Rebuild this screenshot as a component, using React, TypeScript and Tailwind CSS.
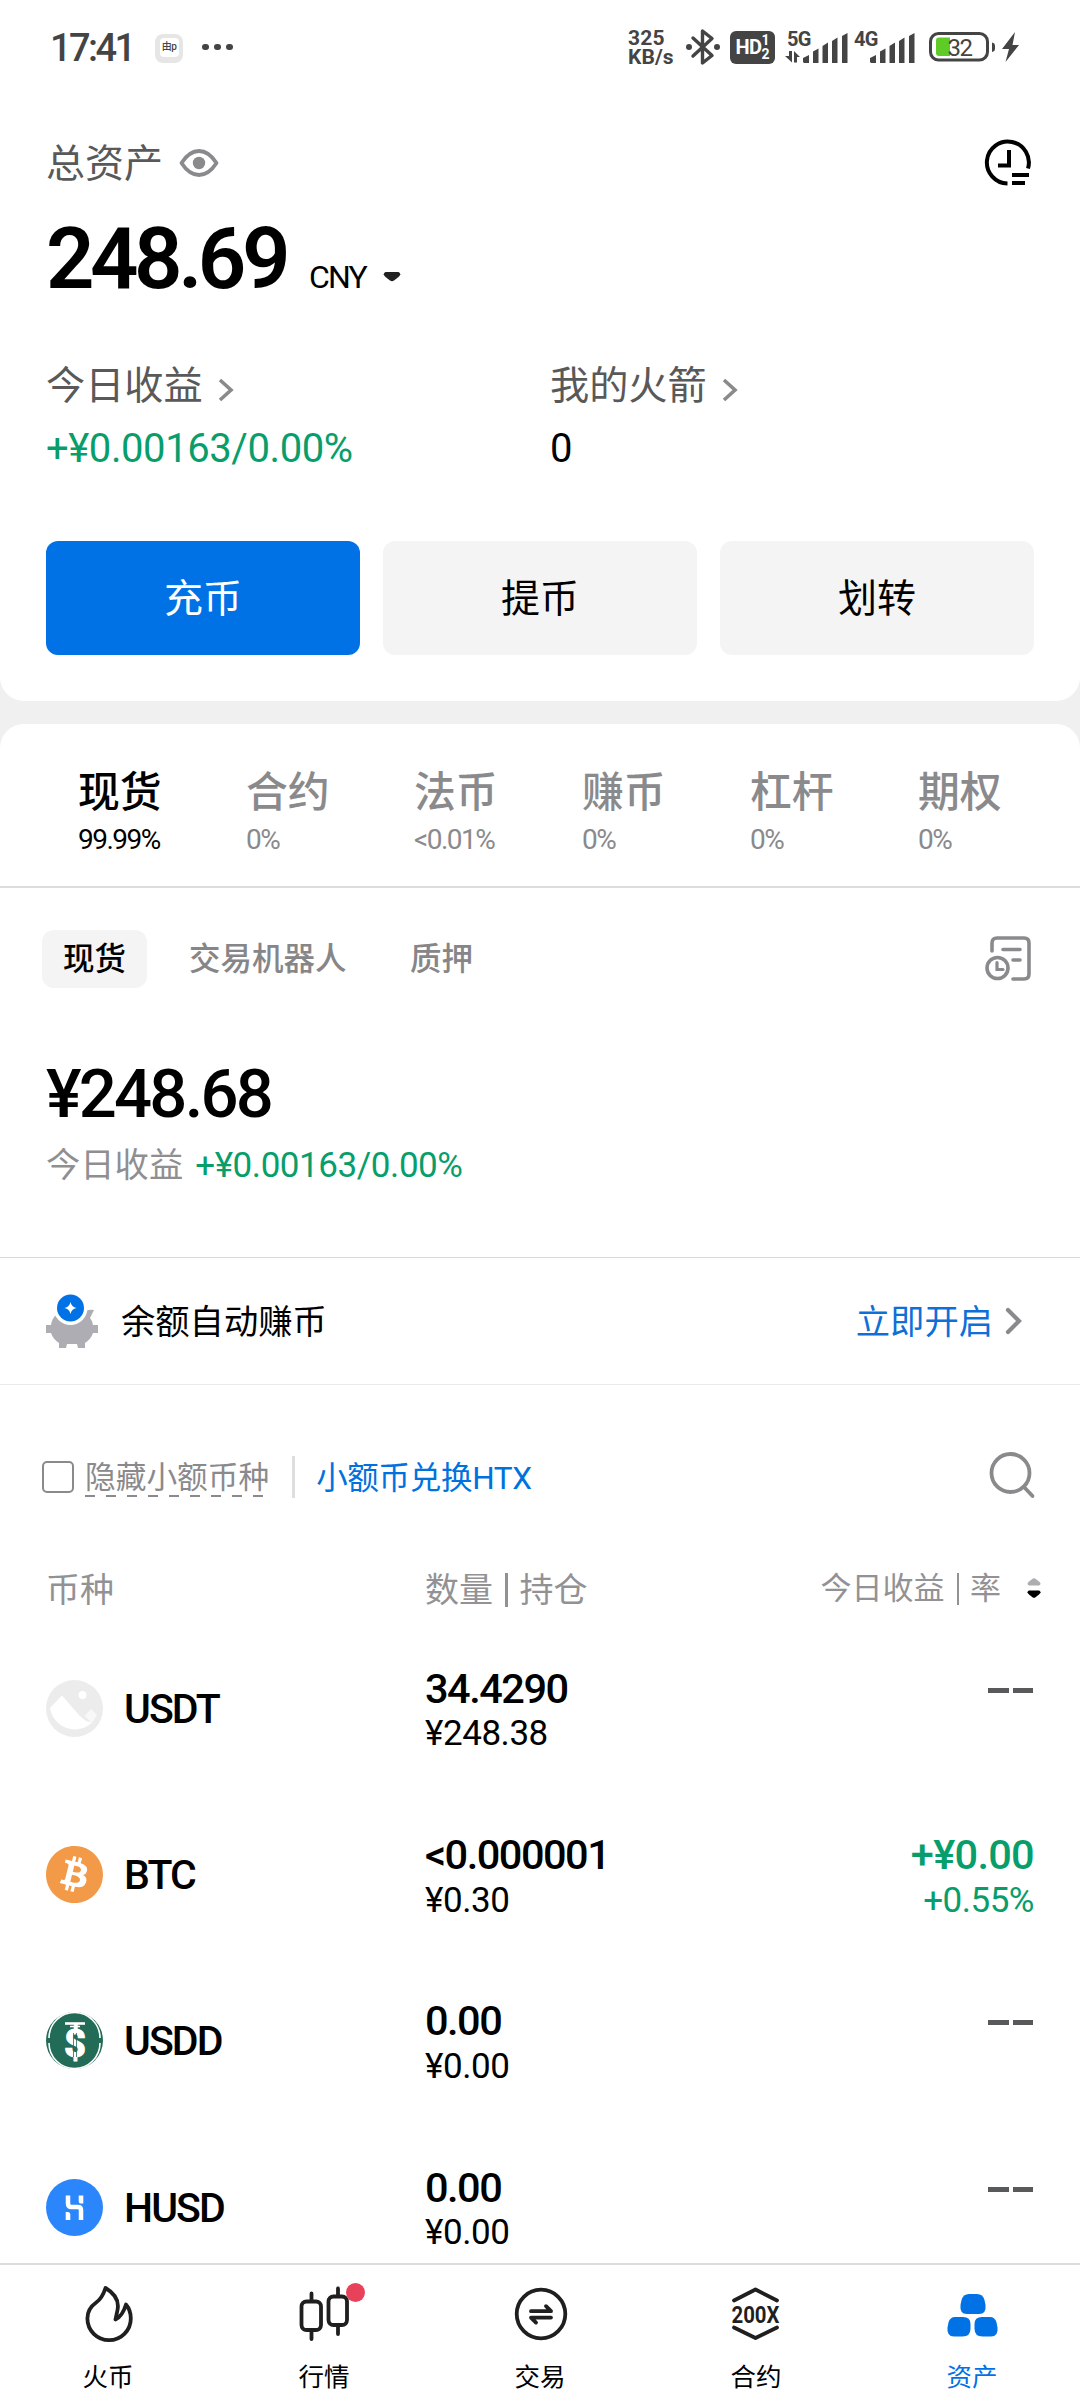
import type { ReactNode } from "react";
import { SiBitcoin } from "react-icons/si";

const stats = [
  { label: "今日收益", value: "+¥0.00163/0.00%", up: true },
  { label: "我的火箭", value: "0", up: false },
];

const accounts = [
  { name: "现货", share: "99.99%" },
  { name: "合约", share: "0%" },
  { name: "法币", share: "<0.01%" },
  { name: "赚币", share: "0%" },
  { name: "杠杆", share: "0%" },
  { name: "期权", share: "0%" },
];

interface Coin {
  symbol: string;
  icon: ReactNode;
  amount: string;
  value: string;
  profit?: string;
  rate?: string;
}

const coins: Coin[] = [
  { symbol: "USDT", icon: <PlaceholderCoin />, amount: "34.4290", value: "¥248.38" },
  {
    symbol: "BTC",
    icon: <SiBitcoin className="h-[57px] w-[57px] text-[#f39a49]" />,
    amount: "<0.000001",
    value: "¥0.30",
    profit: "+¥0.00",
    rate: "+0.55%",
  },
  { symbol: "USDD", icon: <UsddCoin />, amount: "0.00", value: "¥0.00" },
  { symbol: "HUSD", icon: <HusdCoin />, amount: "0.00", value: "¥0.00" },
];

const navItems = [
  { label: "火币", icon: <FlameIcon /> },
  { label: "行情", icon: <CandlesIcon />, dot: true },
  { label: "交易", icon: <SwapIcon /> },
  { label: "合约", icon: <LeverageIcon /> },
  { label: "资产", icon: <AssetsIcon />, active: true },
];

export default function App() {
  return (
    <div className="flex h-[2400px] w-[1080px] flex-col overflow-hidden bg-[#f0f0f0] font-[Roboto,'Noto_Sans_CJK_SC',sans-serif] leading-none text-black">
      <main className="h-[2263px] overflow-hidden">
        <section className="h-[701px] rounded-b-[24px] bg-white">
          <StatusBar />
          <Overview />
        </section>

        <section className="mt-[23px] h-[1560px] rounded-t-[24px] bg-white">
          <AccountTabs />
          <SpotSummary />
          <AutoEarn />
          <CoinFilter />
          <CoinTable />
        </section>
      </main>
      <BottomNav />
    </div>
  );
}

function StatusBar() {
  return (
    <div className="flex h-[94px] items-center text-[#444]">
      <span className="ml-[50px] w-[84px] pt-[2px] text-[38px] font-medium tracking-[-2.6px]">17:41</span>
      <div className="mt-[2px] ml-[21px] flex h-[29px] w-[28px] items-start justify-center rounded-[8px] bg-[#e6e6e6] pt-[4px]">
        <span className="flex h-[19px] w-[19px] items-center justify-center rounded-[4px] bg-white text-[10px] font-medium tracking-[-0.5px]">
          由p
        </span>
      </div>
      <div className="ml-[19px] flex gap-[5.6px]">
        <i className="h-[6.6px] w-[6.6px] rounded-full bg-[#444]" />
        <i className="h-[6.6px] w-[6.6px] rounded-full bg-[#444]" />
        <i className="h-[6.6px] w-[6.6px] rounded-full bg-[#444]" />
      </div>

      <div className="ml-[395px] w-[50px] pt-[2px] text-[21px] leading-[19px] font-bold">
        <div className="tracking-[0.2px]">325</div>
        <div className="tracking-[0.1px]">KB/s</div>
      </div>
      <svg className="ml-[7px] h-[38px] w-[36px]" viewBox="0 0 36 38" fill="none" stroke="#444" strokeWidth="3.4" strokeLinejoin="round" strokeLinecap="round">
        <path d="M8 10 27 27.5 17.5 35V3L27 10.5 8 28" />
        <circle cx="4" cy="19" r="3" fill="#444" stroke="none" />
        <circle cx="32" cy="19" r="3" fill="#444" stroke="none" />
      </svg>
      <div className="ml-[9px] flex h-[33px] w-[45px] items-center justify-center rounded-[6px] bg-[#444] text-white">
        <span className="text-[20px] font-bold tracking-[-0.5px]">HD</span>
        <span className="flex flex-col text-[14px] leading-[14px] font-bold">
          <span>1</span>
          <span>2</span>
        </span>
      </div>
      <Signal label="5G" data />
      <Signal label="4G" />
      <svg className="ml-[12px] h-[32px] w-[92px]" viewBox="0 0 92 32">
        <rect x="1.5" y="2.5" width="57" height="26.5" rx="8" fill="none" stroke="#444" strokeWidth="3" />
        <path d="M63 11.500a3.500 3.500 0 0 1 3 3.500v2.500a3.500 3.500 0 0 1-3 3.500z" fill="#444" />
        <path d="M10 6.500h11v18.500H10a3 3 0 0 1-3-3V9.500a3 3 0 0 1 3-3z" fill="#5fcb26" />
        <text x="18.500" y="24.500" fontSize="24" fill="#444" letterSpacing="-1.500">32</text>
        <path d="M86 1 73 18h7l-3.500 13L90 14h-6.500z" fill="#444" />
      </svg>
    </div>
  );
}

function Signal({ label, data = false }: { label: string; data?: boolean }) {
  return (
    <svg
      className={data ? "ml-[9px] h-[36px] w-[66px] overflow-visible" : "ml-[1px] h-[36px] w-[66px] overflow-visible"}
      viewBox="0 0 66 36"
      fill="#444"
    >
      <text x="3" y="17" fontSize="20" fontWeight="700" letterSpacing="-0.600">
        {label}
      </text>
      {data && <path d="M5 22h3v11.500L1 27h4zM10 33.500h3V28h3l-6-6z" />}
      <path d="M19 33v-4l6-3v8h-5zM29 34V22.500l5.500-3V34zM38.500 34V17l5.500-3.500V34zM48 34V12l5.500-3.500V34zM58 34V7l5.500-3V34z" />
    </svg>
  );
}

function Overview() {
  return (
    <>
      <div className="mt-[34px] flex h-[70px] items-center pr-[49px] pl-[46px]">
        <span className="pt-[2px] text-[39px] text-[#595959]">总资产</span>
        <svg className="ml-[16px] h-[30px] w-[40px]" viewBox="0 0 40 30" fill="none">
          <path d="M2.500 15C8 6.500 13.500 3 20 3s12 3.500 17.500 12C32 23.500 26.500 27 20 27S8 23.500 2.500 15z" stroke="#8a8a8e" strokeWidth="3.800" strokeLinejoin="round" />
          <circle cx="20" cy="15" r="6.200" fill="#8a8a8e" />
        </svg>
        <svg className="ml-auto h-[48px] w-[48px]" viewBox="0 0 48 48" fill="none" stroke="#000" strokeWidth="4">
          <path d="M24.500 44.500A21 21 0 1 1 45 29.500" />
          <path d="M26 11v15.500H15" />
          <path d="M29 36h17M29 44h13" />
        </svg>
      </div>
      <div className="mt-[19px] flex items-baseline pl-[46px]">
        <span className="text-[85px] font-semibold tracking-[-4.5px]">248.69</span>
        <span className="ml-[23px] text-[32px] tracking-[-1.8px]">CNY</span>
        <svg className="ml-[17px] h-[16px] w-[18px]" viewBox="0 0 18 16">
          <path d="M2.500 0h13q3.500 2 0 5l-4.500 3.500q-2 1.500-4 0L2.500 5Q-1 2 2.500 0z" fill="#222" />
        </svg>
      </div>

      <div className="mt-[59px] grid grid-cols-[504px_1fr] pl-[46px]">
        {stats.map((s) => (
          <div key={s.label}>
            <div className="flex h-[50px] items-center pt-[2px] text-[39.2px] text-[#595959]">
              {s.label}
              <svg className="mt-[5px] ml-[14px] h-[24px] w-[18px]" viewBox="0 0 18 24" fill="none" stroke="#8a8a8a" strokeWidth="3.600">
                <path d="m3 2 11 10L3 22" />
              </svg>
            </div>
            <div
              className={`mt-[12px] flex h-[50px] items-center pt-[2px] text-[40px] ${s.up ? "tracking-[-0.42px] text-[#089e6c]" : ""}`}
            >
              {s.value}
            </div>
          </div>
        ))}
      </div>

      <div className="mt-[68px] grid grid-cols-3 gap-[23px] px-[46px] text-[39px]">
        <button className="h-[114px] rounded-[12px] bg-[#0072e6] pt-[3px] text-white">充币</button>
        <button className="h-[114px] rounded-[12px] bg-[#f4f4f4] pt-[3px]">提币</button>
        <button className="h-[114px] rounded-[12px] bg-[#f4f4f4] pt-[3px]">划转</button>
      </div>
    </>
  );
}

function AccountTabs() {
  return (
    <div className="flex border-b-2 border-[#dcdcdc] pt-[44px] pb-[31px] pl-[78px]">
      {accounts.map((a, i) => (
        <div key={a.name} className={`w-[168px] shrink-0 ${i === 0 ? "text-black" : "text-[#8a8a8d]"}`}>
          <div className="flex h-[50px] items-center text-[41.8px] font-medium">{a.name}</div>
          <div className="mt-[7px] flex h-[30px] items-center text-[28px] tracking-[-1.5px]">{a.share}</div>
        </div>
      ))}
    </div>
  );
}

function SpotSummary() {
  return (
    <>
      <div className="mt-[42px] flex h-[58px] items-center pr-[49px] pl-[42px] text-[31.5px] font-medium text-[#868689]">
        <span className="flex h-[58px] w-[105px] items-center justify-center rounded-[12px] bg-[#f4f4f4] pt-[2px] text-black">
          现货
        </span>
        <span className="ml-[42px] w-[158px] pt-[2px]">交易机器人</span>
        <span className="ml-[63px] pt-[2px]">质押</span>
        <svg className="ml-auto h-[46px] w-[46px]" viewBox="0 0 46 46" fill="none" stroke="#8a8a8d" strokeWidth="3.600" strokeLinecap="round">
          <path d="M7 15V7q0-5 5-5h27q5 0 5 5v31q0 5-5 5H28" />
          <path d="M18 13.500h17M28 24h7" />
          <circle cx="12.500" cy="32" r="10.500" />
          <path d="M12 26.500v7h6" strokeWidth="3.200" />
        </svg>
      </div>
      <div className="mt-[73px] pl-[46px] text-[67px] font-medium tracking-[-2.8px]">¥248.68</div>
      <div className="mt-[17px] flex h-[40px] items-center pl-[46px]">
        <span className="pt-[1px] text-[34.3px] text-[#8f8f92]">今日收益</span>
        <span className="ml-[12px] text-[35px] tracking-[-0.43px] text-[#089e6c]">+¥0.00163/0.00%</span>
      </div>
    </>
  );
}

function AutoEarn() {
  return (
    <div className="mt-[72px] flex h-[128px] items-center border-y border-t-[#dadada] border-b-[#e9e9e9] px-[46px] text-[34.3px]">
      <svg className="h-[54px] w-[52px]" viewBox="0 0 52 54">
        <path d="M11 20Q6 24 5 31H0v8h5q2 6 8 10v5h7l1-4h10l1 4h7v-5q6-4 8-10h5v-8h-5q-1-5-3-7l4-8q-8-1-12 4H14z" fill="#adadb3" />
        <circle cx="24.500" cy="14" r="17" fill="#fff" />
        <circle cx="24.500" cy="14" r="13.500" fill="#0072e6" />
        <path d="M24.500 8q1 5 6 6-5 1-6 6-1-5-6-6 5-1 6-6z" fill="#fff" />
      </svg>
      <span className="ml-[23px] pt-[3px]">余额自动赚币</span>
      <span className="ml-auto pt-[3px] text-[#0e6fd8]">立即开启</span>
      <svg className="mr-[11px] ml-[12px] h-[28px] w-[18px]" viewBox="0 0 18 28" fill="none" stroke="#8a8a8d" strokeWidth="4.200" strokeLinecap="round">
        <path d="m3 3 11 11L3 25" />
      </svg>
    </div>
  );
}

function CoinFilter() {
  return (
    <div className="mt-[64px] flex h-[56px] items-center pr-[43px] pl-[42px]">
      <span className="h-[32px] w-[32px] rounded-[5px] border-2 border-[#8a8a8d]" />
      <div className="ml-[11px] pt-[6px]">
        <div className="text-[30.7px] text-[#8a8a8d]">隐藏小额币种</div>
        <svg className="mt-[2px] h-[2px] w-[184px]" viewBox="0 0 184 2">
          <path d="M0 1h182" stroke="#8a8a8d" strokeWidth="2" strokeDasharray="10 11" />
        </svg>
      </div>
      <i className="ml-[23px] h-[42px] w-[3px] bg-[#dedede]" />
      <span className="ml-[21px] pt-[4px] text-[31.5px] tracking-[-0.3px] text-[#0072dd]">小额币兑换HTX</span>
      <svg className="mb-[5px] ml-auto h-[48px] w-[48px]" viewBox="0 0 48 48" fill="none" stroke="#8a8a8d" strokeWidth="3.800" strokeLinecap="round">
        <circle cx="21.500" cy="22" r="19" />
        <path d="m35 36 8.500 9" />
      </svg>
    </div>
  );
}

function CoinTable() {
  return (
    <>
      <div className="mt-[63px] flex h-[40px] items-center pr-[39px] pl-[46px] text-[34px] text-[#929295]">
        <span className="w-[379px] pt-[4px]">币种</span>
        <span className="flex items-center pt-[4px]">
          数量
          <i className="mx-[12px] h-[34px] w-[2.5px] bg-[#929295]" />
          持仓
        </span>
        <span className="ml-auto flex items-center pt-[1px] text-[31px]">
          今日收益
          <i className="mr-[11px] ml-[12px] h-[32px] w-[2.5px] bg-[#929295]" />率
        </span>
        <svg className="ml-[26px] h-[20px] w-[14px]" viewBox="0 0 14 20">
          <path d="M2 7.500q-3-1.500 0-4L5.500.800q1.500-1 3 0L12 3.500q3 2.500 0 4z" fill="#aeaeb2" />
          <path d="M2 12.500q-3 1.500 0 4l3.500 2.700q1.500 1 3 0L12 16.500q3-2.500 0-4z" fill="#000" />
        </svg>
      </div>

      <div className="mt-[17px]">
        {coins.map((c) => (
          <div key={c.symbol} className="flex h-[166.4px] items-center px-[46px]">
            <div className="h-[57px] w-[57px]">{c.icon}</div>
            <span className="ml-[21px] w-[301px] pt-[2px] text-[41px] font-medium tracking-[-1.9px]">{c.symbol}</span>
            <div className="flex h-[86px] flex-col justify-between pt-[2.5px]">
              <span className="text-[41.5px] font-medium tracking-[-1.5px]">{c.amount}</span>
              <span className="text-[35px] tracking-[-0.45px]">{c.value}</span>
            </div>
            <div className="ml-auto flex h-[86px] flex-col items-end justify-between pt-[2.5px] text-[#089e6c]">
              {c.profit ? (
                <>
                  <span className="text-[41.5px] font-medium tracking-[-0.7px]">{c.profit}</span>
                  <span className="text-[35px] tracking-[-0.5px]">{c.rate}</span>
                </>
              ) : (
                <span className="mt-[20px] mr-[1px] flex gap-[4px]">
                  <i className="h-[5px] w-[20.5px] bg-[#58595b]" />
                  <i className="h-[5px] w-[20.5px] bg-[#58595b]" />
                </span>
              )}
            </div>
          </div>
        ))}
      </div>
    </>
  );
}

function BottomNav() {
  return (
    <nav className="grid h-[137px] grid-cols-5 border-t-2 border-[#dcdcdc] bg-white">
      {navItems.map((item) => (
        <div
          key={item.label}
          className={`flex flex-col items-center pt-[17px] ${item.active ? "text-[#0072e6]" : "text-black"}`}
        >
          <div className="relative h-[64px] w-[64px]">
            {item.icon}
            {item.dot && <i className="absolute top-[1px] left-[54px] h-[19px] w-[19px] rounded-full bg-[#e8415a]" />}
          </div>
          <span className="mt-[19px] text-[25.5px]">{item.label}</span>
        </div>
      ))}
    </nav>
  );
}

function FlameIcon() {
  return (
    <svg className="h-[64px] w-[64px]" viewBox="0 0 64 64" fill="none" stroke="#1f1f1f" strokeWidth="3.800" strokeLinejoin="round">
      <path d="M29.500 6C38 11 43.500 18 41.500 28L39.500 37.500C44 35.500 48 29 50 22.500 53 26 54.800 31 54.800 36.500a21.700 21.700 0 0 1-43.400 0c0-7 2.500-11.500 8.500-15.700C24.500 17.500 27 14 29.500 6z" />
    </svg>
  );
}

function CandlesIcon() {
  return (
    <svg className="h-[64px] w-[64px]" viewBox="0 0 64 64" fill="none" stroke="#1f1f1f" strokeWidth="3.800" strokeLinecap="round">
      <rect x="9.500" y="19.500" width="19.500" height="28.500" rx="5" />
      <path d="M19.500 11.500V19M19.500 48v9" />
      <rect x="36.500" y="14.500" width="18.500" height="28.500" rx="5" />
      <path d="M46 6.500V14M46 43v9" />
    </svg>
  );
}

function SwapIcon() {
  return (
    <svg className="h-[64px] w-[64px]" viewBox="0 0 64 64" fill="none" stroke="#1f1f1f" strokeWidth="3.800" strokeLinecap="round" strokeLinejoin="round">
      <circle cx="33" cy="32" r="24.300" />
      <path d="M23 29.200h20l-5-5M43 35.600H23l5 5" />
    </svg>
  );
}

function LeverageIcon() {
  return (
    <svg className="h-[64px] w-[64px]" viewBox="0 0 64 64" fill="none" stroke="#1f1f1f" strokeWidth="3.800" strokeLinecap="round" strokeLinejoin="round">
      <path d="M10 18.500 31.500 7.500 53 18.500M10 45.500 31.500 56 53 45.500" />
      <text
        x="7.500"
        y="40.500"
        fill="#1f1f1f"
        stroke="none"
        fontSize="24.500"
        fontWeight="700"
        textLength="48"
        lengthAdjust="spacingAndGlyphs"
      >
        200X
      </text>
    </svg>
  );
}

function AssetsIcon() {
  return (
    <svg className="h-[64px] w-[64px]" viewBox="0 0 64 64" fill="#0072e6">
      <path d="M29 12h8q6 0 7.500 6l1 5q1 9-6.500 9H27q-7.500 0-6.500-9l1-5q1.500-6 7.500-6z" />
      <path d="M15 35h8q7.500 0 7.500 7v4.500q0 8-8 8H14q-7.500 0-6.500-9l1-5q1.500-5.500 6.500-5.500z" />
      <path d="M42 35h8q5 0 6.500 5.500l1 5q1 9-6.500 9h-8.500q-8 0-8-8V42q0-7 7.500-7z" />
    </svg>
  );
}

function PlaceholderCoin() {
  return (
    <svg className="h-[57px] w-[57px]" viewBox="0 0 57 57">
      <circle cx="28.500" cy="28.500" r="28.500" fill="#ececec" />
      <path d="M4 28 16 15.500 33 35 40 41 46 42.500A25 25 0 0 1 4 28z" fill="#fff" />
      <path d="M38.500 36 45 29l6 6-5 8z" fill="#f8f8f8" />
      <circle cx="36.500" cy="15" r="4" fill="#fff" />
    </svg>
  );
}

function UsddCoin() {
  return (
    <svg className="h-[57px] w-[57px]" viewBox="0 0 57 57">
      <circle cx="28.500" cy="28.500" r="28.500" fill="#216b57" />
      <path d="M3 26a25.500 25.500 0 0 1 51 0M3 31a25.500 25.500 0 0 0 51 0" fill="none" stroke="#fff" strokeWidth="1.600" />
      <path d="M19 11.500h20" stroke="#fff" strokeWidth="2.600" />
      <path d="M24 14.500h10" stroke="#fff" strokeWidth="1.500" />
      <text x="29" y="44.500" textAnchor="middle" fontSize="38" fontWeight="900" fill="#fff" stroke="#fff" strokeWidth="0.800">
        $
      </text>
      <path d="M27.500 21v24M30.500 21v24" stroke="#216b57" strokeWidth="0.800" />
    </svg>
  );
}

function HusdCoin() {
  return (
    <svg className="h-[57px] w-[57px]" viewBox="0 0 57 57">
      <circle cx="28.500" cy="28.500" r="28.500" fill="#2b86fc" />
      <path d="M22 16.500v8q0 3.500 3.500 3.500H32q3 0 3 3v10" fill="none" stroke="#fff" strokeWidth="4.500" />
      <path d="M32.700 16.500h4.600v8h-2q-2.600 0-2.600-2.600zM19.700 33h2q2.600 0 2.600 2.600V41h-4.600z" fill="#fff" />
    </svg>
  );
}
